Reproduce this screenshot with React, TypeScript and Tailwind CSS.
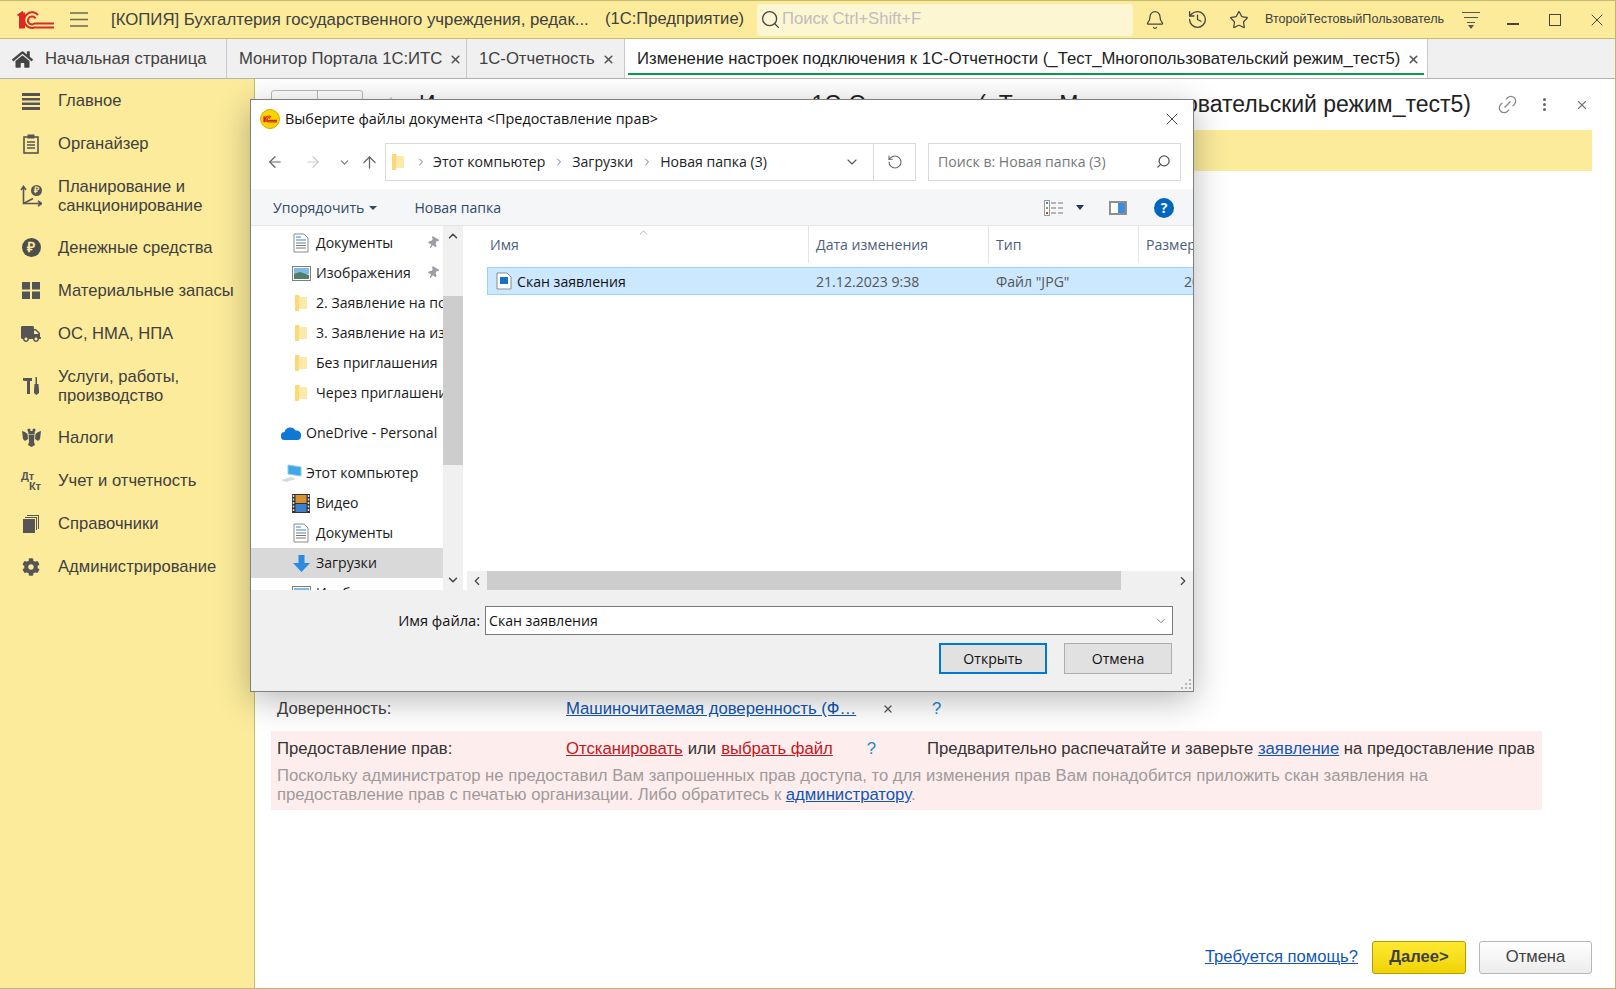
import { Bell, ChevronDown, ChevronLeft, ChevronRight, ChevronUp, ArrowLeft, ArrowRight, ArrowUp, History, Link2, RotateCw, Search, Star, X } from "lucide-react";
import { FaCog, FaHome, FaThumbtack, FaTruck } from "react-icons/fa";
import type { ReactNode } from "react";

const arial = "font-['Liberation_Sans',Arial,sans-serif]";
const segoe = "font-['Open_Sans','Noto_Sans',sans-serif]";

function Logo1C() {
  return (
    <svg width="37" height="18" viewBox="0 0 37 18" fill="none" stroke="#dc2a22">
      <path d="M0.5 4.5 L5 1.5 V17.5" strokeWidth="2" />
      <path d="M3 2 V17.5 M7 1.5 V17.5" strokeWidth="2" />
      <path d="M21 4 A7.8 7.8 0 1 0 17.5 16.5 H37" strokeWidth="2" />
      <path d="M18.5 7.5 A4 4 0 1 0 17.5 12.5 H37" strokeWidth="2" />
    </svg>
  );
}

function DialogLogo() {
  return (
    <span className="w-[20px] h-[20px] rounded-full bg-[#fbd400] border border-[#d9a800] flex items-center justify-center shrink-0">
      <svg width="14" height="8" viewBox="0 0 37 18" fill="none" stroke="#d8261f">
        <path d="M4 2 V17.5" strokeWidth="6" />
        <path d="M21 4 A7.8 7.8 0 1 0 17.5 16.5 H37" strokeWidth="3" />
        <path d="M18.5 7.5 A4 4 0 1 0 17.5 12.5 H37" strokeWidth="3" />
      </svg>
    </span>
  );
}

function Folder() {
  return (
    <svg width="14" height="18" viewBox="0 0 14 18" className="shrink-0">
      <path d="M1 1 H5 L6 3 H12 V15 L5 15 V17 L1 17 Z" fill="#fcd974" />
      <path d="M5 3 H13 V15 H5 Z" fill="#fde9a8" />
    </svg>
  );
}

function DocIcon() {
  return (
    <svg width="16" height="20" viewBox="0 0 16 20" className="shrink-0">
      <path d="M1 1 H11 L15 5 V19 H1 Z" fill="#fff" stroke="#8a8a8a" />
      <path d="M3 4 H8 M3 7 H13" stroke="#2f86d8" strokeWidth="1.2" />
      <path d="M3 10 H13 M3 12.5 H13 M3 15 H13" stroke="#777" />
    </svg>
  );
}

function PicturesIcon() {
  return (
    <svg width="19" height="15" viewBox="0 0 19 15" className="shrink-0">
      <rect x="0.5" y="0.5" width="18" height="14" fill="#fff" stroke="#7d7d7d" />
      <rect x="2" y="2" width="15" height="6" fill="#7fb9e6" />
      <path d="M2 8 L8 6 L17 9 V13 H2 Z" fill="#4f7f66" />
    </svg>
  );
}

function VideoIcon() {
  return (
    <svg width="18" height="19" viewBox="0 0 18 19" className="shrink-0">
      <rect width="18" height="19" fill="#333" />
      <rect x="3.5" y="1" width="11" height="8" fill="#d9902f" />
      <rect x="3.5" y="10" width="11" height="8" fill="#3f7fd0" />
      <path d="M1.5 1 V18 M16.5 1 V18" stroke="#ddd" strokeWidth="1.5" strokeDasharray="2 1.5" />
    </svg>
  );
}

function OneDriveIcon() {
  return (
    <svg width="21" height="14" viewBox="0 0 21 14" className="shrink-0">
      <path d="M4 14 A4 4 0 0 1 3.5 6 A6 6 0 0 1 14.5 4.5 A4.7 4.7 0 0 1 20 10 A4 4 0 0 1 17 14 Z" fill="#0f78d4" />
    </svg>
  );
}

function ComputerIcon() {
  return (
    <svg width="22" height="18" viewBox="0 0 22 18" className="shrink-0">
      <path d="M8 1 L21 3 V12 L8 10 Z" fill="#3fa6e8" stroke="#8fc8ee" />
      <path d="M1 16 L11 13 L16 15 L6 18 Z" fill="#d9d9d9" />
    </svg>
  );
}

function DownloadIcon() {
  return (
    <svg width="17" height="17" viewBox="0 0 17 17" className="shrink-0">
      <path d="M5.5 0 H11.5 V8 H17 L8.5 17 L0 8 H5.5 Z" fill="#2b8ae2" />
    </svg>
  );
}

function NavRow({ pad, icon, label, pin, active }: { pad: string; icon: ReactNode; label: string; pin?: boolean; active?: boolean }) {
  return (
    <div className={`h-[30px] flex items-center shrink-0 overflow-hidden whitespace-nowrap ${pad} ${active ? "bg-[#d9d9d9]" : ""}`}>
      <span className="w-[22px] flex justify-center shrink-0">{icon}</span>
      <span className="ml-[4px] text-[#1a1a1a] flex-1">{label}</span>
      {pin && <FaThumbtack className="text-[#9aa0a6] mr-[4px] shrink-0 rotate-[30deg]" size={12} />}
    </div>
  );
}

function SideItem({ icon, lines }: { icon: ReactNode; lines: string[] }) {
  return (
    <div className={`flex items-center shrink-0 ${lines.length > 1 ? "h-[61px]" : "h-[43px]"}`}>
      <span className="w-[58px] flex justify-center pl-[4px] text-[#555] shrink-0">{icon}</span>
      <span className="text-[16.6px] leading-[19px] text-[#404040]">
        {lines.map((l) => (
          <span key={l} className="block">{l}</span>
        ))}
      </span>
    </div>
  );
}

function Tab({ width, label, active, icon, close = true }: { width: string; label: string; active?: boolean; icon?: ReactNode; close?: boolean }) {
  return (
    <div className={`relative h-full flex items-center border-r border-[#c9c9c9] text-[16.7px] pt-[1px] ${width} ${active ? "bg-white text-[#222]" : "text-[#404040]"}`}>
      {icon}
      <span className={`whitespace-nowrap ${icon ? "ml-[12px]" : "ml-[12px]"}`}>{label}</span>
      {close && <X className="ml-[7px] text-[#555]" size={13} strokeWidth={3} />}
      {active && <span className="absolute left-[3px] right-[3px] bottom-[3px] h-[2px] bg-[#0a9a50]" />}
    </div>
  );
}

export default function App() {
  return (
    <div className={`relative w-[1616px] h-[989px] overflow-hidden flex flex-col bg-white border-r border-b border-[#bfb76e] ${arial}`}>
      {/* top bar */}
      <header className="h-[39px] shrink-0 flex items-center bg-[#fbeb9b] border-t border-b border-[#c4bb74] text-[#404040]">
        <span className="ml-[17px] flex"><Logo1C /></span>
        <svg width="18" height="15" viewBox="0 0 18 15" stroke="#6b6b55" className="ml-[16px]">
          <path d="M0 1 H18 M0 7.5 H18 M0 14 H18" strokeWidth="1.4" />
        </svg>
        <span className="ml-[23px] text-[16.8px] whitespace-nowrap w-[494px]">[КОПИЯ] Бухгалтерия государственного учреждения, редак...</span>
        <span className="text-[16.6px] whitespace-nowrap w-[152px]">(1С:Предприятие)</span>
        <div className="w-[376px] h-[32px] rounded-[3px] bg-[#fdf6d2] flex items-center">
          <Search className="ml-[3px] text-[#444]" size={21} strokeWidth={1.5} />
          <span className="ml-[1px] text-[16.6px] text-[#bdbdbd]">Поиск Ctrl+Shift+F</span>
        </div>
        <Bell className="ml-[12px] text-[#444]" size={20} strokeWidth={1.5} />
        <History className="ml-[22px] text-[#444]" size={21} strokeWidth={1.5} />
        <Star className="ml-[21px] text-[#444]" size={20} strokeWidth={1.5} />
        <span className="ml-[16px] text-[12.6px] whitespace-nowrap w-[200px]">ВторойТестовыйПользователь</span>
        <svg width="18" height="18" viewBox="0 0 18 18" fill="#555" className="ml-[-3px]">
          <path d="M0 1 H18 V2 H0 Z M2 6 H16 V7 H2 Z M5 11 H13 V12 H5 Z M6 14 H12 L9 18 Z" />
        </svg>
        <span className="ml-[27px] w-[12px] h-[1.5px] mt-[9px] bg-[#444]" />
        <span className="ml-[30px] w-[12px] h-[12px] border-[1.5px] border-[#444]" />
        <X className="ml-[26px] text-[#444]" size={20} strokeWidth={1.2} />
      </header>

      {/* tabs */}
      <nav className="h-[40px] shrink-0 flex bg-[#f0f0f0] border-b border-[#b3b3b3]">
        <Tab width="w-[227px]" label="Начальная страница" icon={<FaHome className="ml-[12px] text-[#444]" size={21} />} close={false} />
        <Tab width="w-[240px]" label="Монитор Портала 1С:ИТС" />
        <Tab width="w-[158px]" label="1С-Отчетность" />
        <Tab width="w-[803px]" label="Изменение настроек подключения к 1С-Отчетности (_Тест_Многопользовательский режим_тест5)" active />
      </nav>

      <div className="flex-1 min-h-0 flex">
        {/* sidebar */}
        <aside className="w-[255px] shrink-0 flex flex-col bg-[#fbeb9b] border-r border-[#c4bb74]">
          <SideItem lines={["Главное"]} icon={<svg width="18" height="18" fill="#555"><path d="M0 1 H18 V4 H0 Z M0 6 H18 V8.5 H0 Z M0 10.5 H18 V13 H0 Z M0 15 H18 V18 H0 Z" /></svg>} />
          <SideItem lines={["Органайзер"]} icon={<svg width="16" height="20" viewBox="0 0 16 20" fill="none" stroke="#555"><rect x="1" y="3" width="14" height="16" strokeWidth="1.6" /><rect x="5" y="1" width="6" height="3" fill="#555" /><path d="M4 8 H12 M4 11 H12 M4 14 H12" strokeWidth="1.3" /></svg>} />
          <SideItem lines={["Планирование и", "санкционирование"]} icon={
            <span className="relative w-[22px] h-[22px]">
              <svg width="22" height="22" viewBox="0 0 22 22" fill="none" stroke="#555" strokeWidth="1.6">
                <path d="M3.5 2 V18.5 H21" />
                <path d="M1 5 L3.5 1.5 L6 5 M18 16 L21.5 18.5 L18 21 M3.5 18.5 L13 13.5" />
              </svg>
              <span className="absolute right-0 top-0 w-[11px] h-[11px] rounded-full bg-[#555] text-[#fbeb9b] text-[9px] font-bold leading-[11px] text-center">₽</span>
            </span>} />
          <SideItem lines={["Денежные средства"]} icon={<span className="w-[19px] h-[19px] rounded-full bg-[#4d4d4d] text-[#fbeb9b] text-[14px] font-bold leading-[19px] text-center">₽</span>} />
          <SideItem lines={["Материальные запасы"]} icon={<svg width="18" height="17" fill="#555"><path d="M0 0 H8 V7.5 H0 Z M10 0 H18 V7.5 H10 Z M0 9.5 H8 V17 H0 Z M10 9.5 H18 V17 H10 Z" /></svg>} />
          <SideItem lines={["ОС, НМА, НПА"]} icon={<FaTruck size={20} />} />
          <SideItem lines={["Услуги, работы,", "производство"]} icon={<svg width="17" height="18" viewBox="0 0 17 18" fill="#555"><path d="M0 1 H9 V4 H7 V17 H4 V4 H2 L0 3.5 Z M12.5 0 H14 V7 H15.5 L16 13 V16 L13.2 18 L11 16 V13 L11.5 7 H12.5 Z" /></svg>} />
          <SideItem lines={["Налоги"]} icon={
            <svg width="19" height="19" viewBox="0 0 19 19" fill="#555">
              <circle cx="7" cy="2" r="1.6" />
              <circle cx="12" cy="2" r="1.6" />
              <path d="M6 3 H13 L12.5 6 H6.5 Z" />
              <path d="M0 3 L3 4 L5.5 6 L6 11 L3 13 L1 11 Z M19 3 L16 4 L13.5 6 L13 11 L16 13 L18 11 Z" />
              <path d="M6.5 6.5 H12.5 L12 14 L13 17 L9.5 19 L6 17 L7 14 Z" />
            </svg>} />
          <SideItem lines={["Учет и отчетность"]} icon={<span className="w-[20px] text-[#555] text-[11px] font-bold leading-[10px]"><span className="block">Дт</span><span className="block text-right">Кт</span></span>} />
          <SideItem lines={["Справочники"]} icon={<svg width="16" height="18" fill="#555"><path d="M4 0 H16 V14 H15 V1 H4 Z M2 2 H14 V15 H13 V3 H2 Z M0 4 H12 V18 H0 Z" /></svg>} />
          <SideItem lines={["Администрирование"]} icon={<FaCog size={18} />} />
        </aside>

        {/* page behind the dialog */}
        <main className="flex-1 min-w-0 flex flex-col pl-[16px] pr-[23px] pb-[14px]">
          <div className="h-[51px] shrink-0 flex items-center">
            <div className="w-[92px] h-[30px] flex border border-[#b9b9b9] rounded-[3px] shrink-0">
              <span className="flex-1 border-r border-[#b9b9b9]" />
              <span className="flex-1" />
            </div>
            <Star className="ml-[19px] text-[#bbb] shrink-0" size={18} strokeWidth={1.2} />
            <span className="ml-[19px] text-[23px] whitespace-nowrap text-[#222] shrink-0">Изменение настроек подключения к 1С-Отчетности (_Тест_Многопользовательский режим_тест5)</span>
            <Link2 className="ml-[25px] text-[#888] -rotate-45 shrink-0" size={23} strokeWidth={1.3} />
            <span className="ml-[24px] flex flex-col gap-[2px] shrink-0">
              <span className="w-[3px] h-[3px] bg-[#666] rounded-full" />
              <span className="w-[3px] h-[3px] bg-[#666] rounded-full" />
              <span className="w-[3px] h-[3px] bg-[#666] rounded-full" />
            </span>
            <X className="ml-[29px] text-[#777] shrink-0" size={14} strokeWidth={2} />
          </div>
          <div className="h-[41px] shrink-0 bg-[#fbeb9b]" />

          <div className="mt-[529px] h-[18px] flex items-center text-[16.7px] text-[#404040] shrink-0">
            <span className="w-[295px] pl-[6px] shrink-0">Доверенность:</span>
            <a className="w-[290px] text-[#0f56b3] underline whitespace-nowrap shrink-0">Машиночитаемая доверенность (Ф…</a>
            <X className="ml-[26px] text-[#555]" size={12} strokeWidth={2.5} />
            <span className="ml-[38px] text-[#1b87c5]">?</span>
          </div>

          <div className="mt-[13px] w-[1271px] h-[79px] shrink-0 bg-[#fdeded] pt-[9px] px-[6px] text-[16.7px]">
            <div className="h-[18px] flex items-center whitespace-nowrap text-[#333]">
              <span className="w-[289px] shrink-0">Предоставление прав:</span>
              <a className="text-[#c4161c] underline">Отсканировать</a>
              <span className="ml-[5px]">или</span>
              <a className="ml-[5px] text-[#c4161c] underline">выбрать файл</a>
              <span className="ml-[34px] text-[#1b87c5]">?</span>
              <span className="ml-[51px]">Предварительно распечатайте и заверьте <a className="text-[#0f56b3] underline">заявление</a> на предоставление прав</span>
            </div>
            <p className="mt-[8px] leading-[19px] text-[#a09a9a]">
              Поскольку администратор не предоставил Вам запрошенных прав доступа, то для изменения прав Вам понадобится приложить скан заявления на предоставление прав с печатью организации. Либо обратитесь к <a className="text-[#0f56b3] underline">администратору</a>.
            </p>
          </div>

          <div className="mt-auto flex items-center justify-end text-[16.6px]">
            <a className="text-[#0f56b3] underline">Требуется помощь?</a>
            <button type="button" className="ml-[14px] w-[94px] h-[33px] rounded-[3px] border border-[#b59c00] bg-gradient-to-b from-[#ffe92e] to-[#efd300] font-bold text-[#404040]">Далее&gt;</button>
            <button type="button" className="ml-[13px] w-[113px] h-[33px] rounded-[3px] border border-[#b8b8b8] bg-gradient-to-b from-white to-[#ececec] text-[#404040]">Отмена</button>
          </div>
        </main>
      </div>

      {/* file dialog */}
      <div className={`absolute left-[250px] top-[99px] w-[944px] h-[593px] flex flex-col bg-white border border-[#7f7f7f] shadow-[0_8px_32px_rgba(0,0,0,0.28)] text-[14.1px] ${segoe}`}>
        <div className="h-[43px] shrink-0 flex items-center pb-[6px] pl-[9px] pr-[11px]">
          <DialogLogo />
          <span className="ml-[5px] text-[14.4px] text-[#111] whitespace-nowrap">Выберите файлы документа &lt;Предоставление прав&gt;</span>
          <X className="ml-auto text-[#222]" size={20} strokeWidth={1} />
        </div>

        <div className="h-[38px] shrink-0 flex items-stretch pl-[5px] pr-[11px]">
          <span className="w-[38px] flex items-center justify-center"><ArrowLeft className="text-[#666]" size={18} strokeWidth={1.6} /></span>
          <span className="w-[38px] flex items-center justify-center"><ArrowRight className="text-[#ccc]" size={18} strokeWidth={1.6} /></span>
          <span className="w-[24px] flex items-center justify-center"><ChevronDown className="text-[#777]" size={13} strokeWidth={2} /></span>
          <span className="w-[26px] flex items-center justify-center"><ArrowUp className="text-[#666]" size={19} strokeWidth={1.6} /></span>
          <div className="ml-[3px] w-[489px] flex items-center border border-[#d9d9d9] text-[#222] pb-[1px]">
            <span className="ml-[5px]"><Folder /></span>
            <ChevronRight className="ml-[10px] text-[#777]" size={12} />
            <span className="ml-[6px] whitespace-nowrap">Этот компьютер</span>
            <ChevronRight className="ml-[8px] text-[#777]" size={12} />
            <span className="ml-[7px]">Загрузки</span>
            <ChevronRight className="ml-[8px] text-[#777]" size={12} />
            <span className="ml-[7px] whitespace-nowrap">Новая папка (3)</span>
            <ChevronDown className="ml-auto mr-[13px] text-[#555]" size={16} strokeWidth={1.6} />
          </div>
          <div className="w-[42px] flex items-center justify-center border border-l-0 border-[#d9d9d9]">
            <RotateCw className="text-[#666] -scale-x-100" size={16} strokeWidth={1.6} />
          </div>
          <div className="ml-[12px] w-[253px] flex items-center border border-[#d9d9d9] text-[#777] pl-[9px] pb-[1px]">
            <span className="whitespace-nowrap">Поиск в: Новая папка (3)</span>
            <Search className="ml-auto mr-[9px] text-[#555] -scale-x-100" size={15} strokeWidth={2} />
          </div>
        </div>

        <div className="mt-[8px] h-[37px] shrink-0 flex items-center bg-[#f5f6f7] border-b border-[#e5e5e5] pl-[22px] pr-[19px] pt-[1px] text-[#2f4a66]">
          <span>Упорядочить</span>
          <span className="ml-[5px] w-0 h-0 border-x-[4px] border-x-transparent border-t-[4px] border-t-[#2f4a66]" />
          <span className="ml-[37px]">Новая папка</span>
          <svg width="20" height="16" viewBox="0 0 20 16" className="ml-auto mr-[3px]" fill="none">
            <rect x="0.5" y="0.5" width="5" height="15" fill="#fff" stroke="#999" />
            <rect x="2" y="2" width="2" height="2" fill="#2f8fd0" />
            <rect x="2" y="7" width="2" height="2" fill="#8a9a2a" />
            <rect x="2" y="12" width="2" height="2" fill="#c8452a" />
            <path d="M7 3 H12 M14 3 H19 M7 8 H12 M14 8 H19 M7 13 H12 M14 13 H19" stroke="#777" />
          </svg>
          <span className="ml-[9px] w-0 h-0 border-x-[4px] border-x-transparent border-t-[5px] border-t-[#1f3a5a]" />
          <span className="ml-[25px] w-[18px] h-[14px] border-2 border-[#8f8f8f] bg-white flex justify-end">
            <span className="w-[7px] bg-[#3a8fdc]" />
          </span>
          <span className="ml-[27px] w-[20px] h-[20px] rounded-full bg-[#0067c0] text-white text-[14px] font-bold leading-[20px] text-center">?</span>
        </div>

        <div className="flex-1 min-h-0 flex">
          {/* nav pane */}
          <div className="w-[192px] shrink-0 overflow-hidden pt-[2px]">
            <NavRow pad="pl-[39px]" icon={<DocIcon />} label="Документы" pin />
            <NavRow pad="pl-[39px]" icon={<PicturesIcon />} label="Изображения" pin />
            <NavRow pad="pl-[39px]" icon={<Folder />} label="2. Заявление на подключение" />
            <NavRow pad="pl-[39px]" icon={<Folder />} label="3. Заявление на изменение" />
            <NavRow pad="pl-[39px]" icon={<Folder />} label="Без приглашения" />
            <NavRow pad="pl-[39px]" icon={<Folder />} label="Через приглашение" />
            <div className="mt-[10px]"><NavRow pad="pl-[29px]" icon={<OneDriveIcon />} label="OneDrive - Personal" /></div>
            <div className="mt-[10px]"><NavRow pad="pl-[29px]" icon={<ComputerIcon />} label="Этот компьютер" /></div>
            <NavRow pad="pl-[39px]" icon={<VideoIcon />} label="Видео" />
            <NavRow pad="pl-[39px]" icon={<DocIcon />} label="Документы" />
            <NavRow pad="pl-[39px]" icon={<DownloadIcon />} label="Загрузки" active />
            <NavRow pad="pl-[39px]" icon={<PicturesIcon />} label="Изображения" />
          </div>
          <div className="w-[20px] shrink-0 flex flex-col bg-[#f0f0f0]">
            <span className="h-[20px] flex items-center justify-center"><ChevronUp className="text-[#444]" size={14} strokeWidth={2.5} /></span>
            <span className="h-[169px] mt-[50px] bg-[#cdcdcd]" />
            <span className="mt-auto h-[20px] flex items-center justify-center"><ChevronDown className="text-[#444]" size={14} strokeWidth={2.5} /></span>
          </div>

          {/* file list */}
          <div className="flex-1 min-w-0 flex flex-col pl-[4px]">
            <div className="relative h-[37px] shrink-0 flex items-center text-[#4c607a] whitespace-nowrap overflow-hidden">
              <ChevronUp className="absolute left-[170px] top-0 text-[#888]" size={13} strokeWidth={1.2} />
              <span className="w-[341px] pl-[23px] shrink-0">Имя</span>
              <span className="w-[180px] pl-[7px] border-l border-[#e5e5e5] h-full flex items-center shrink-0">Дата изменения</span>
              <span className="w-[150px] pl-[7px] border-l border-[#e5e5e5] h-full flex items-center shrink-0">Тип</span>
              <span className="pl-[7px] border-l border-[#e5e5e5] h-full flex items-center shrink-0">Размер</span>
            </div>
            <div className="mt-[4px] ml-[20px] h-[28px] pt-[1px] shrink-0 flex items-center bg-[#cce8ff] border-y border-l border-[#99d1ff] whitespace-nowrap overflow-hidden text-[#555]">
              <span className="w-[320px] shrink-0 pl-[8px] flex items-center text-[#111]">
                <svg width="16" height="18" viewBox="0 0 16 18" className="shrink-0">
                  <path d="M1 1 H11 L15 5 V17 H1 Z" fill="#fff" stroke="#8a8a8a" />
                  <rect x="4" y="5" width="8" height="7" fill="#1570c9" />
                </svg>
                <span className="ml-[5px]">Скан заявления</span>
              </span>
              <span className="w-[180px] shrink-0 pl-[8px]">21.12.2023 9:38</span>
              <span className="w-[150px] shrink-0 pl-[8px]">Файл "JPG"</span>
              <span className="pl-[46px]">20</span>
            </div>
            <div className="mt-auto h-[19px] shrink-0 flex bg-[#f0f0f0]">
              <span className="w-[20px] flex items-center justify-center"><ChevronLeft className="text-[#444]" size={14} strokeWidth={2} /></span>
              <span className="w-[634px] bg-[#cdcdcd]" />
              <span className="ml-auto w-[20px] flex items-center justify-center"><ChevronRight className="text-[#444]" size={14} strokeWidth={2} /></span>
            </div>
          </div>
        </div>

        <div className="relative h-[101px] shrink-0 bg-[#f0f0f0] pt-[16px] pr-[20px] flex flex-col items-end">
          <div className="flex items-center">
            <span className="mr-[5px] text-[14.6px] text-[#111]">Имя файла:</span>
            <div className="w-[688px] h-[29px] bg-white border border-[#7a7a7a] flex items-center pl-[3px] pr-[4px] text-[#111]">
              <span>Скан заявления</span>
              <ChevronDown className="ml-auto text-[#555]" size={14} strokeWidth={1.2} />
            </div>
          </div>
          <div className="mt-[8px] mr-[1px] flex gap-[17px] text-[#111]">
            <button type="button" className="w-[108px] h-[31px] bg-[#e1e1e1] border-2 border-[#0078d7]">Открыть</button>
            <button type="button" className="w-[108px] h-[31px] bg-[#e1e1e1] border border-[#adadad]">Отмена</button>
          </div>
          <svg width="12" height="12" viewBox="0 0 12 12" fill="#b5b5b5" className="absolute right-[1px] bottom-[1px]">
            <path d="M9 1 h2 v2 h-2 Z M5 5 h2 v2 h-2 Z M9 5 h2 v2 h-2 Z M1 9 h2 v2 h-2 Z M5 9 h2 v2 h-2 Z M9 9 h2 v2 h-2 Z" />
          </svg>
        </div>
      </div>
    </div>
  );
}
